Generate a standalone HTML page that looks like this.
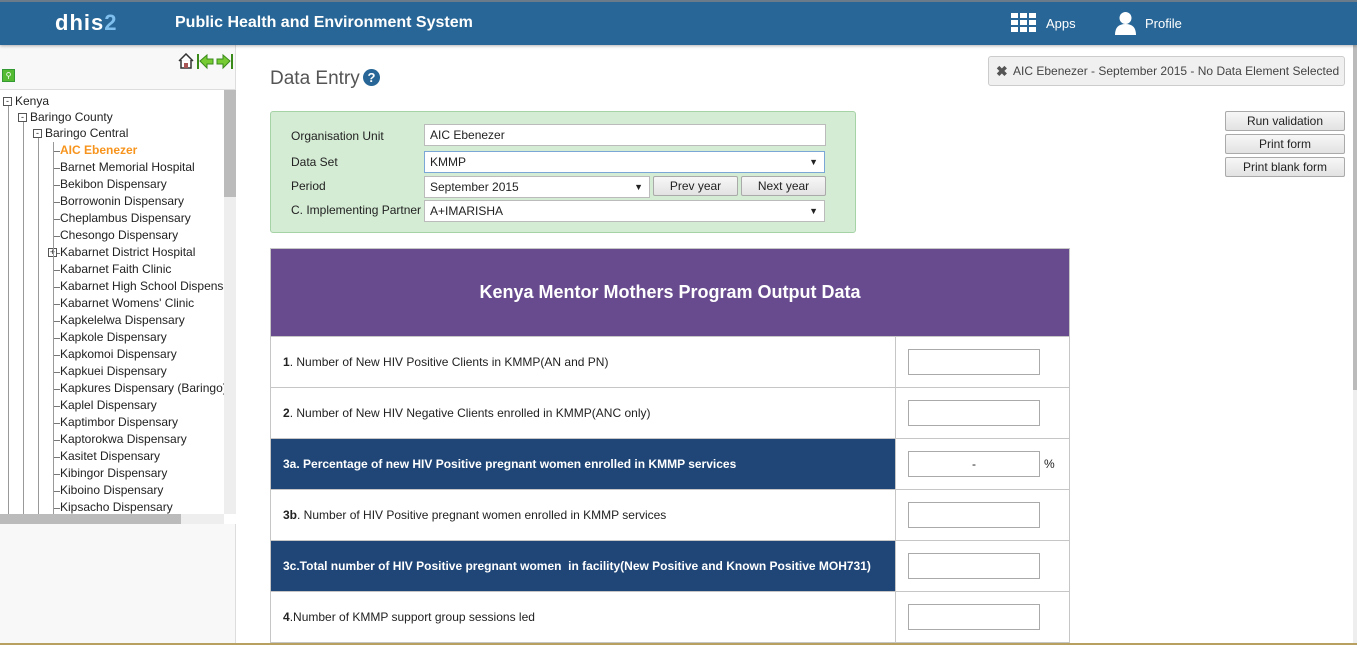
<!DOCTYPE html>
<html><head><meta charset="utf-8"><style>
*{box-sizing:border-box;margin:0;padding:0}
body{width:1357px;height:645px;overflow:hidden;font-family:"Liberation Sans",sans-serif;background:#fff;position:relative;font-size:12px;color:#222}
.hdr{position:absolute;left:0;top:0;width:1357px;height:45px;background:#276696;border-top:2px solid #6b7b8a;box-shadow:0 1px 3px rgba(0,0,0,.3);z-index:2}
.logo{position:absolute;left:55px;top:8px;color:#fff;font-size:22px;font-weight:bold;letter-spacing:1px}
.logo span{color:#7fbfee}
.title{position:absolute;left:175px;top:12px;color:#fff;font-size:16px;font-weight:bold}
.hl{position:absolute;top:14px;color:#fff;font-size:13px}
.side{position:absolute;left:0;top:45px;width:236px;height:600px;background:#f8f8f8;border-right:1px solid #ddd}
.tree{position:absolute;left:0;top:44px;width:236px;height:435px;border-top:1px solid #ddd;overflow:hidden;background:#fff}
.vs{position:absolute;left:224px;top:0;width:12px;height:424px;background:#eee}
.vs i{position:absolute;left:0;top:0;width:12px;height:107px;background:#bbb}
.hs{position:absolute;left:0;top:424px;width:224px;height:10px;background:#eee}
.hs i{position:absolute;left:0;top:0;width:181px;height:10px;background:#bbb}
.n{position:absolute;font-size:12px;color:#222;white-space:nowrap;height:17px;line-height:17px}
.vl{position:absolute;width:1px;background:#999}
.hline{position:absolute;height:1px;background:#777;width:7px}
.box{position:absolute;width:9px;height:9px;border:1px solid #555;background:#fff;font-size:9px;line-height:7px;text-align:center}
.main h1{position:absolute;left:270px;top:68px;font-size:19px;font-weight:normal;color:#555}
.q{position:absolute;left:363px;top:69px;width:17px;height:17px;border-radius:50%;background:#276696;color:#fff;font-size:13px;font-weight:bold;text-align:center;line-height:17px}
.sel{position:absolute;left:270px;top:111px;width:586px;height:122px;background:#d4ebd4;border:1px solid #a6d3a6;border-radius:3px}
.lab{position:absolute;left:291px;font-size:12px;color:#222}
.inp{position:absolute;background:#fff;border:1px solid #bbb;height:22px;font-size:12px;line-height:20px;padding-left:5px}
.inp b{position:absolute;right:6px;top:0;font-size:9px;font-weight:normal}
.btn{position:absolute;background:linear-gradient(#f7f7f7,#e2e2e2);border:1px solid #aaa;font-size:12px;text-align:center;color:#222;border-radius:2px}
.msg{position:absolute;left:988px;top:56px;width:357px;height:30px;background:#f0f0f0;border:1px solid #ccc;border-radius:3px;font-size:12px;color:#444;line-height:28px;padding-left:24px}
table{position:absolute;left:270px;top:248px;width:800px;border-collapse:collapse}
td{border:1px solid #c6c6c6;height:51px;font-size:12px;padding-left:12px}
.th{background:#684b8f;color:#fff;font-weight:bold;font-size:18px;text-align:center;height:88px;padding:0}
.dk{background:#1f4677;color:#fff;font-weight:bold}
.ic{width:174px;position:relative;background:#fff}
.ib{position:absolute;left:12px;top:12px;width:132px;height:26px;border:1px solid #aaa;background:#fff;text-align:center;line-height:24px;color:#222}
</style></head><body>
<div class="hdr">
<div class="logo">dhis<span>2</span></div>
<div class="title">Public Health and Environment System</div>
<svg style="position:absolute;left:1011px;top:11px" width="25" height="20" viewBox="0 0 25 20" fill="#fff"><rect x="0" y="0" width="7" height="5"/><rect x="9" y="0" width="7" height="5"/><rect x="18" y="0" width="7" height="5"/><rect x="0" y="7" width="7" height="5"/><rect x="9" y="7" width="7" height="5"/><rect x="18" y="7" width="7" height="5"/><rect x="0" y="14" width="7" height="5"/><rect x="9" y="14" width="7" height="5"/><rect x="18" y="14" width="7" height="5"/></svg>
<div class="hl" style="left:1046px">Apps</div>
<svg style="position:absolute;left:1115px;top:10px" width="21" height="23" viewBox="0 0 21 23" fill="#fff"><circle cx="10.5" cy="6" r="6"/><path d="M0 23 Q0 12 10.5 12 Q21 12 21 23Z"/></svg>
<div class="hl" style="left:1145px">Profile</div>
</div>
<div class="side">
<svg style="position:absolute;left:178px;top:8px" width="56" height="17" viewBox="0 0 56 17"><path d="M1 8 L8 1 L15 8 M3 7 V15 H13 V7" fill="#fff" stroke="#333" stroke-width="1.5"/><rect x="6" y="10" width="4" height="5" fill="#a55"/><rect x="19" y="1" width="2" height="15" fill="#3a8a1a"/><path d="M22 8 L29 2 V6 H35 V11 H29 V15Z" fill="#7c3" stroke="#3a8a1a"/><path d="M52 8 L45 2 V6 H39 V11 H45 V15Z" fill="#7c3" stroke="#3a8a1a"/><rect x="53" y="1" width="2" height="15" fill="#3a8a1a"/></svg>
<div style="position:absolute;left:2px;top:24px;width:13px;height:13px;background:#5b3;border:1px solid #393;color:#fff;font-size:8px;text-align:center;line-height:11px">⚲</div>
<div class="tree">
<div class="vl" style="left:8px;top:12px;height:412px"></div>
<div class="vl" style="left:23px;top:28px;height:396px"></div>
<div class="vl" style="left:38px;top:44px;height:380px"></div>
<div class="box" style="left:3px;top:7px">-</div><div class="n" style="left:15px;top:3px">Kenya</div>
<div class="box" style="left:18px;top:23px">-</div><div class="n" style="left:30px;top:19px">Baringo County</div>
<div class="box" style="left:33px;top:39px">-</div><div class="n" style="left:45px;top:35px">Baringo Central</div>
<div class="n" style="left:60px;top:52px;color:#f7941d;font-weight:bold">AIC Ebenezer</div>
<div id="items"></div>
<div class="vs"><i></i></div><div class="hs"><i></i></div>
</div>
</div>
<div class="main">
<h1>Data Entry</h1><div class="q">?</div>
<div class="sel"></div>
<div class="lab" style="top:129px">Organisation Unit</div>
<div class="lab" style="top:155px">Data Set</div>
<div class="lab" style="top:179px">Period</div>
<div class="lab" style="top:203px">C. Implementing Partner</div>
<div class="inp" style="left:424px;top:124px;width:402px">AIC Ebenezer</div>
<div class="inp" style="left:424px;top:151px;width:401px;border-color:#7aa7d6">KMMP<b>▼</b></div>
<div class="inp" style="left:424px;top:176px;width:226px">September 2015<b>▼</b></div>
<div class="btn" style="left:653px;top:176px;width:85px;height:20px;line-height:18px">Prev year</div>
<div class="btn" style="left:741px;top:176px;width:85px;height:20px;line-height:18px">Next year</div>
<div class="inp" style="left:424px;top:200px;width:401px">A+IMARISHA<b>▼</b></div>
<div class="msg"><span style="position:absolute;left:7px;font-weight:bold;font-size:14px;color:#555">✖</span>AIC Ebenezer - September 2015 - No Data Element Selected</div>
<div class="btn" style="left:1225px;top:111px;width:120px;height:20px;line-height:18px">Run validation</div>
<div class="btn" style="left:1225px;top:134px;width:120px;height:20px;line-height:18px">Print form</div>
<div class="btn" style="left:1225px;top:157px;width:120px;height:20px;line-height:18px">Print blank form</div>
<table>
<tr><td class="th" colspan="2">Kenya Mentor Mothers Program Output Data</td></tr>
<tr><td><b>1</b>. Number of New HIV Positive Clients in KMMP(AN and PN)</td><td class="ic"><div class="ib"></div></td></tr>
<tr><td><b>2</b>. Number of New HIV Negative Clients enrolled in KMMP(ANC only)</td><td class="ic"><div class="ib"></div></td></tr>
<tr><td class="dk">3a. Percentage of new HIV Positive pregnant women enrolled in KMMP services</td><td class="ic"><div class="ib">-</div><span style="position:absolute;left:148px;top:18px">%</span></td></tr>
<tr><td><b>3b</b>. Number of HIV Positive pregnant women enrolled in KMMP services</td><td class="ic"><div class="ib"></div></td></tr>
<tr><td class="dk">3c.Total number of HIV Positive pregnant women &nbsp;in facility(New Positive and Known Positive MOH731)</td><td class="ic"><div class="ib"></div></td></tr>
<tr><td><b>4</b>.Number of KMMP support group sessions led</td><td class="ic"><div class="ib"></div></td></tr>
</table>
</div>
<div style="position:absolute;left:1353px;top:45px;width:4px;height:600px;background:#eee"><div style="height:345px;background:#bbb"></div></div>
<div style="position:absolute;left:0;top:643px;width:1357px;height:2px;background:#b8a060"></div>
<script>
var names=["Barnet Memorial Hospital","Bekibon Dispensary","Borrowonin Dispensary","Cheplambus Dispensary","Chesongo Dispensary","Kabarnet District Hospital","Kabarnet Faith Clinic","Kabarnet High School Dispensary","Kabarnet Womens' Clinic","Kapkelelwa Dispensary","Kapkole Dispensary","Kapkomoi Dispensary","Kapkuei Dispensary","Kapkures Dispensary (Baringo)","Kaplel Dispensary","Kaptimbor Dispensary","Kaptorokwa Dispensary","Kasitet Dispensary","Kibingor Dispensary","Kiboino Dispensary","Kipsacho Dispensary"];
var h='<div class="hline" style="left:53px;top:61px"></div>';
names.forEach(function(n,i){var t=69+i*17;h+='<div class="hline" style="left:'+(i==5?'57':'53')+'px;top:'+(t+9)+'px;width:'+(i==5?3:7)+'px"></div>';if(i==5)h+='<div class="box" style="left:48px;top:'+(t+4)+'px">+</div>';h+='<div class="n" style="left:60px;top:'+t+'px">'+n+'</div>';});
h+='<div class="vl" style="left:53px;top:52px;height:380px"></div>';
document.getElementById('items').innerHTML=h;
</script>
</body></html>
